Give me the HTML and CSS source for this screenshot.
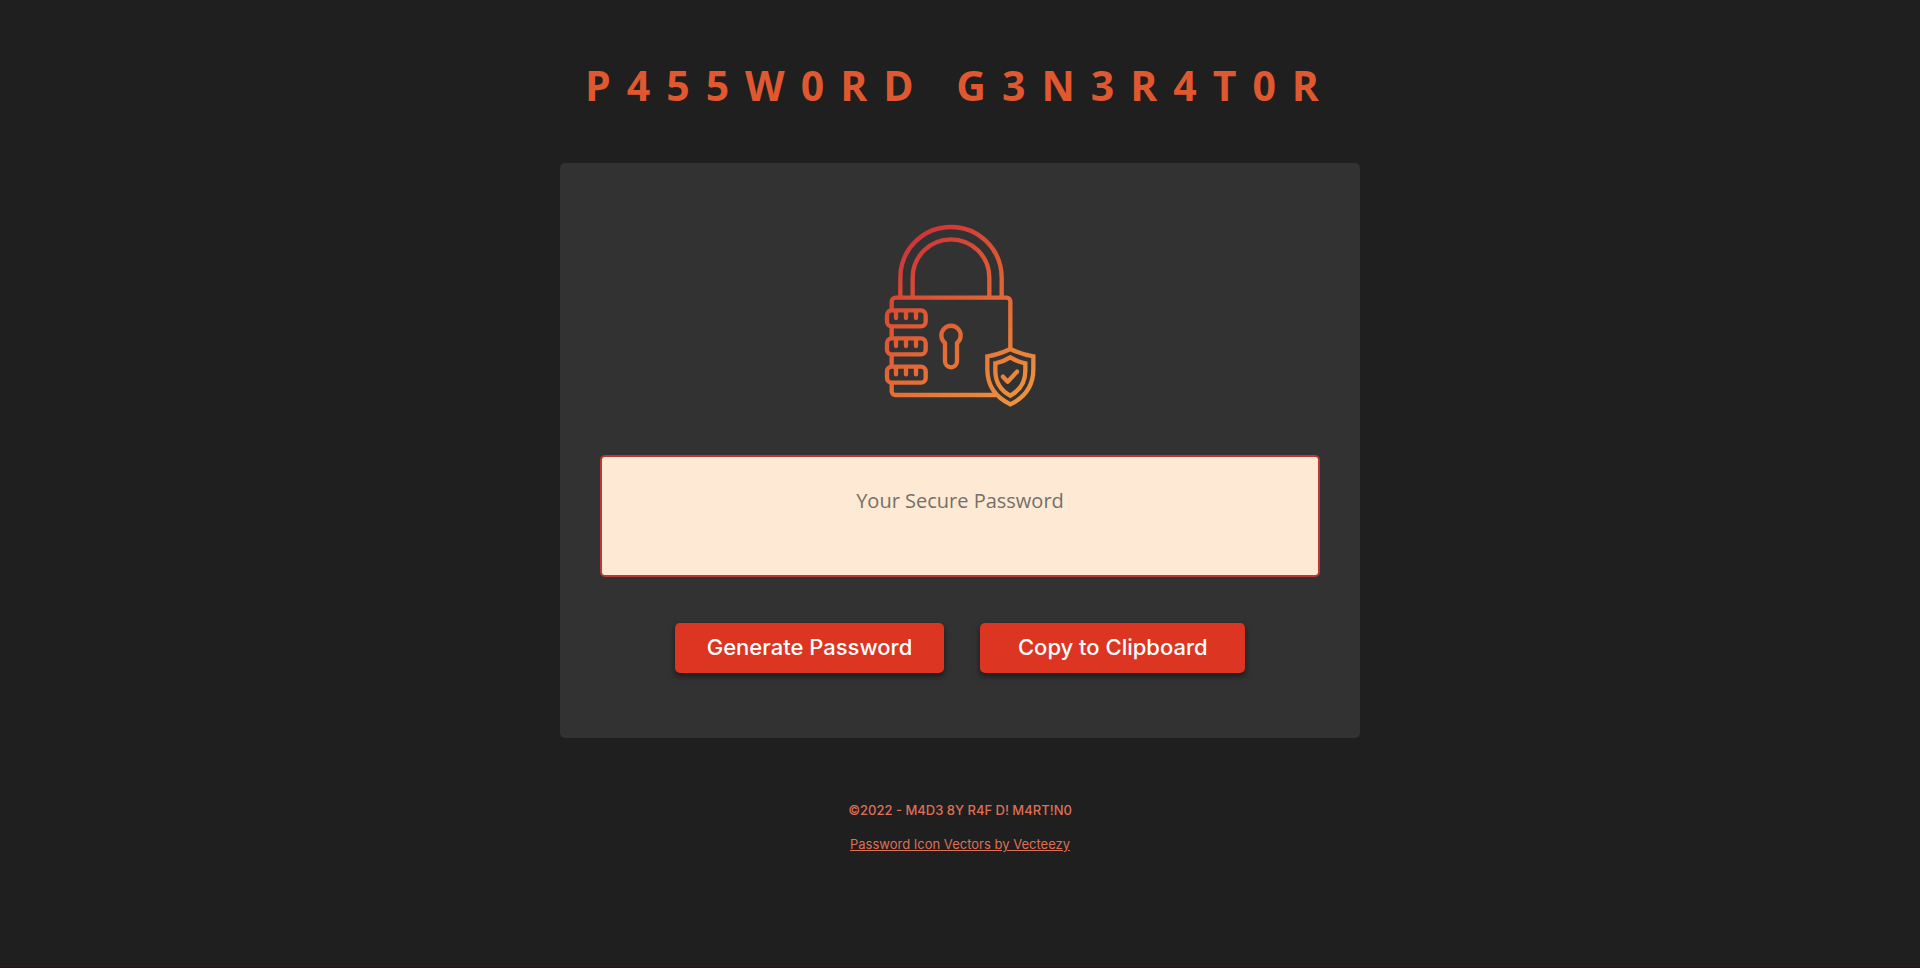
FILE: index.html
```html
<!DOCTYPE html>
<html lang="en">
<head>
<meta charset="utf-8">
<title>Password Generator</title>
<meta name="viewport" content="width=device-width, initial-scale=1">
<link rel="stylesheet" href="styles.css">
</head>
<body>
<header class="header"><h1 class="title">P455W0RD G3N3R4T0R</h1></header>
<main class="card">
  <svg class="lock" viewBox="0 0 540 600" aria-hidden="true">
    <defs>
      <linearGradient id="warm" gradientUnits="userSpaceOnUse" x1="100" y1="120" x2="450" y2="600">
        <stop offset="0" stop-color="#cf3638"/>
        <stop offset="0.3" stop-color="#dd5633"/>
        <stop offset="1" stop-color="#f0963c"/>
      </linearGradient>
    </defs>
    <g fill="none" stroke="url(#warm)" stroke-width="13" stroke-linejoin="round">
      <path d="M91 262V203a152 152 0 0 1 304 0v59M128 262v-59a115 115 0 0 1 230 0v59"/>
      <path d="M65 300v-25a12 12 0 0 1 12-12h333a11 11 0 0 1 11 11v142M65 349v36M65 434v36M65 519v25a11 11 0 0 0 11 11h302"/>
      <rect x="51" y="301" width="116" height="48" rx="14"/>
      <rect x="51" y="385" width="116" height="48" rx="14"/>
      <rect x="51" y="470" width="116" height="48" rx="14"/>
      <path stroke-linecap="round" d="M78 303v21M108 303v21M138 303v21M78 387v21M108 387v21M138 387v21M78 472v21M108 472v21M138 472v21"/>
      <path d="M225 399v55a18 18 0 0 0 36 0v-55a29 29 0 1 0-36 0z"/>
      <path stroke-linejoin="miter" d="M421 417Q385 434 352 439v39q0 72 69 105q69-33 69-105v-39Q457 434 421 417zM421 442Q400 455 376 460v22q0 50 45 75q45-25 45-75v-22Q442 455 421 442z"/>
      <path stroke-linecap="round" d="M399 500l14 15 28-30"/>
    </g>
  </svg>
  <textarea class="password" aria-label="Your Secure Password" placeholder="Your Secure Password" readonly></textarea>
  <div class="actions">
    <button class="button" type="button">Generate Password</button>
    <button class="button" type="button">Copy to Clipboard</button>
  </div>
</main>
<footer class="footer">
  <p class="credit">©2022 - M4D3 8Y R4F D! M4RT!N0</p>
  <a class="link" href="#">Password Icon Vectors by Vecteezy</a>
</footer>
</body>
</html>
```
FILE: styles.css
```css
* { box-sizing: border-box; }
body {
  margin: 0;
  min-height: 100vh;
  display: flex;
  flex-direction: column;
  align-items: center;
  padding: 55px 16px 24px;
  background: #1f1f1f;
  border-bottom: 1px solid #241619;
  font-family: Inter, "Open Sans", sans-serif;
}
.title {
  margin: 0;
  font-family: "Open Sans", sans-serif;
  font-size: 41px;
  line-height: 60px;
  font-weight: 700;
  letter-spacing: 16px;
  text-align: center;
  color: #df5830;
}
.card {
  width: 100%;
  max-width: 800px;
  margin-top: 48px;
  padding: 47px 40px 65px;
  display: flex;
  flex-direction: column;
  align-items: center;
  border-radius: 5px;
  background: #323232;
}
.lock { display: block; width: 180px; height: 200px; }
.password {
  display: block;
  width: 100%;
  height: 122px;
  margin-top: 45px;
  padding: 30px;
  border: 2px solid #b93835;
  border-radius: 5px;
  background: #fee9d4;
  color: #323232;
  font: 500 20px/28px "Open Sans", sans-serif;
  text-align: center;
  resize: none;
}
.password::placeholder { color: #757069; opacity: 1; }
.actions {
  display: flex;
  flex-wrap: wrap;
  justify-content: center;
  gap: 36px;
  margin-top: 46px;
}
.button {
  min-width: 265px;
  min-height: 50px;
  padding: 8px 32px 10px;
  border: 0;
  border-radius: 5px;
  background: #dc3522;
  box-shadow: 0 3px 6px rgba(0, 0, 0, 0.5);
  color: #fff;
  font: 500 22px/32px Inter, "Open Sans", sans-serif;
}
.footer {
  margin-top: 62px;
  display: flex;
  flex-direction: column;
  align-items: center;
  gap: 14px;
  color: #df6f55;
  font-size: 13px;
  line-height: 20px;
}
.credit { margin: 0; font-weight: 500; }
.link { color: inherit; }
```
